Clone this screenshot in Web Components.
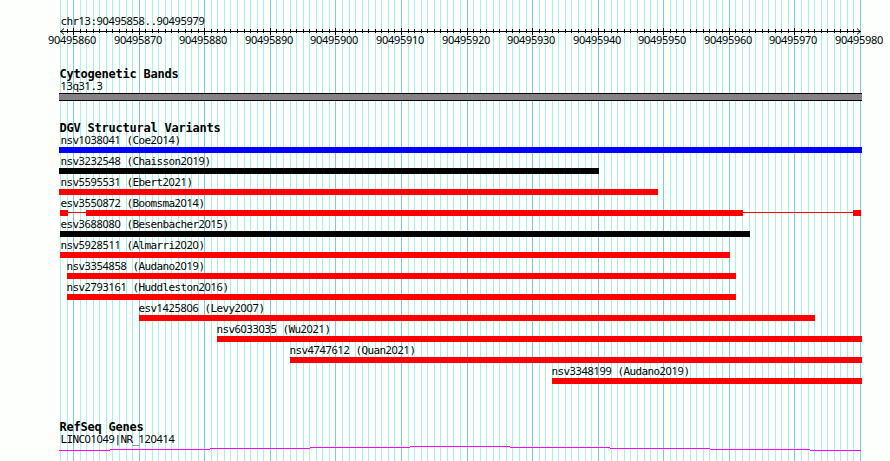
<!DOCTYPE html>
<html lang="en">

<head>
    <meta charset="utf-8">
    <title>chr13:90495858..90495979</title>
    <style>
        body {
            margin: 0;
            background: #fdfffc;
            color: #000;
            font: 11px/12px "DejaVu Sans Mono", "Liberation Mono", monospace;
        }
    </style>
</head>

<body>

    <genome-browser>
        <scale-ruler start="90495858" end="90495979"></scale-ruler>
        <track-group name="Cytogenetic Bands" style="height: 54px">
            <feature-row label="13q31.3" kind="band" spans="59-862"></feature-row>
        </track-group>
        <track-group name="DGV Structural Variants" style="height: 299px">
            <feature-row label="nsv1038041 (Coe2014)" color="#00f" spans="59-862"></feature-row>
            <feature-row label="nsv3232548 (Chaisson2019)" color="#000" spans="59-599"></feature-row>
            <feature-row label="nsv5595531 (Ebert2021)" spans="59-658"></feature-row>
            <feature-row label="esv3550872 (Boomsma2014)" spans="60-68 86-743 853-861"></feature-row>
            <feature-row label="esv3688080 (Besenbacher2015)" color="#000" spans="60-750"></feature-row>
            <feature-row label="nsv5928511 (Almarri2020)" spans="60-730"></feature-row>
            <feature-row label="nsv3354858 (Audano2019)" spans="67-736"></feature-row>
            <feature-row label="nsv2793161 (Huddleston2016)" spans="67-736"></feature-row>
            <feature-row label="esv1425806 (Levy2007)" spans="139-815"></feature-row>
            <feature-row label="nsv6033035 (Wu2021)" spans="217-862"></feature-row>
            <feature-row label="nsv4747612 (Quan2021)" spans="290-862"></feature-row>
            <feature-row label="nsv3348199 (Audano2019)" spans="552-862"></feature-row>
        </track-group>
        <track-group name="RefSeq Genes">
            <feature-row label="LINC01049|NR_120414" kind="intron" spans="59-861"></feature-row>
        </track-group>
    </genome-browser>

    <script>
        // x pixel of the n-th base
        const baseX = n => Math.floor(60.5 + n * 6.5574);

        class GenomeBrowser extends HTMLElement {
            constructor() {
                super();
                const shadow = this.attachShadow({ mode: 'open' });
                let lines = '';
                for (let i = 0; i <= 122; i++) {
                    const color = i % 10 === 2 ? '#7ec8e8' : '#a9efec';
                    lines += `<rect x="${baseX(i)}" width="1" height="461" fill="${color}"/>`;
                }
                shadow.innerHTML = `
                    <style>
                        :host { display: grid; width: 890px; height: 461px; overflow: hidden; }
                        svg, main { grid-area: 1 / 1; }
                        main { display: flex; flex-direction: column; z-index: 1; }
                    </style>
                    <svg width="890" height="461" shape-rendering="crispEdges">${lines}</svg>
                    <main><slot></slot></main>`;
            }
        }

        class ScaleRuler extends HTMLElement {
            connectedCallback() {
                const shadow = this.attachShadow({ mode: 'open' });
                const start = Number(this.getAttribute('start'));
                const end = Number(this.getAttribute('end'));
                let ticks = '';
                let labels = '';
                for (let i = 1; i <= 122; i++) {
                    const x = baseX(i);
                    const major = i % 10 === 2;
                    if (i < 122) {
                        ticks += major
                            ? `<rect x="${x}" y="1" width="1" height="7"/>`
                            : `<rect x="${x}" y="2" width="1" height="4"/>`;
                    }
                    if (major) {
                        labels += `<text x="${x - 25}" y="17">${start + i}</text>`;
                    }
                }
                shadow.innerHTML = `
                    <style>
                        :host { display: flex; flex-direction: column; height: 68px; }
                        div { height: 12px; padding: 15px 0 0 60.4px; }
                        svg { display: block; flex: none; }
                        div, text { font-family: "Noto Sans", sans-serif; letter-spacing: -0.292px; }
                        .mono { font-family: "DejaVu Sans Mono", monospace; letter-spacing: -0.622px; }
                    </style>
                    <div><span class="mono">chr</span>13<span class="mono">:</span>${start}<span class="mono">..</span>${end}</div>
                    <svg width="890" height="24">
                        <g shape-rendering="crispEdges">
                            <rect x="60" y="4" width="801" height="1"/>
                            ${ticks}
                        </g>
                        <path d="M64 1.5L60.8 4.5L64 7.5M857 1.5L860.2 4.5L857 7.5" fill="none" stroke="#000"/>
                        ${labels}
                    </svg>`;
            }
        }

        class TrackGroup extends HTMLElement {
            connectedCallback() {
                const shadow = this.attachShadow({ mode: 'open' });
                shadow.innerHTML = `
                    <style>
                        :host { display: flex; flex-direction: column; flex: none; }
                        h2 {
                            margin: 0 0 0 59.4px;
                            font: bold 12px/13px "DejaVu Sans Mono", monospace;
                            letter-spacing: -0.225px;
                        }
                    </style>
                    <h2>${this.getAttribute('name')}</h2>
                    <slot></slot>`;
            }
        }

        class FeatureRow extends HTMLElement {
            connectedCallback() {
                const shadow = this.attachShadow({ mode: 'open' });
                const kind = this.getAttribute('kind');
                const color = this.getAttribute('color') || '#f00';
                const spans = this.getAttribute('spans').split(' ').map(s => s.split('-').map(Number));
                const left = spans[0][0];
                const right = spans[spans.length - 1][1];
                let glyph = '';
                if (kind === 'band') {
                    glyph = `<rect x="${left}" width="${right - left}" height="8"/>
                        <rect x="${left}" y="1" width="${right - left}" height="6" fill="#848284"/>`;
                } else if (kind === 'intron') {
                    // shallow hat, one pixel per step
                    glyph = '<path d="M59 4.5H110M110 3.5H210M210 2.5H310M310 1.5H410M410 .5H510M510 1.5H610M610 2.5H710M710 3.5H810M810 4.5H861" stroke="#f0f"/>';
                } else {
                    glyph = `<rect x="${left}" y="2" width="${right - left}" height="1" fill="${color}"/>`;
                    spans.forEach(([a, b]) => {
                        glyph += `<rect x="${a}" width="${b - a}" height="6" fill="${color}"/>`;
                    });
                }
                // digits use a face with a plain zero
                const label = this.getAttribute('label').replace(/\d+/g, '<span>$&</span>');
                shadow.innerHTML = `
                    <style>
                        :host { display: flex; flex-direction: column; flex: none; height: 21px; }
                        div {
                            height: 12px;
                            line-height: 10px;
                            padding-left: ${Math.max(left - 0.6, 60.4)}px;
                            letter-spacing: -0.622px;
                            white-space: pre;
                        }
                        span { font-family: "Noto Sans", sans-serif; letter-spacing: -0.292px; }
                    </style>
                    <div>${label}</div>
                    <svg width="890" height="9" shape-rendering="crispEdges">${glyph}</svg>`;
            }
        }

        customElements.define('genome-browser', GenomeBrowser);
        customElements.define('scale-ruler', ScaleRuler);
        customElements.define('track-group', TrackGroup);
        customElements.define('feature-row', FeatureRow);
    </script>

</body>

</html>
